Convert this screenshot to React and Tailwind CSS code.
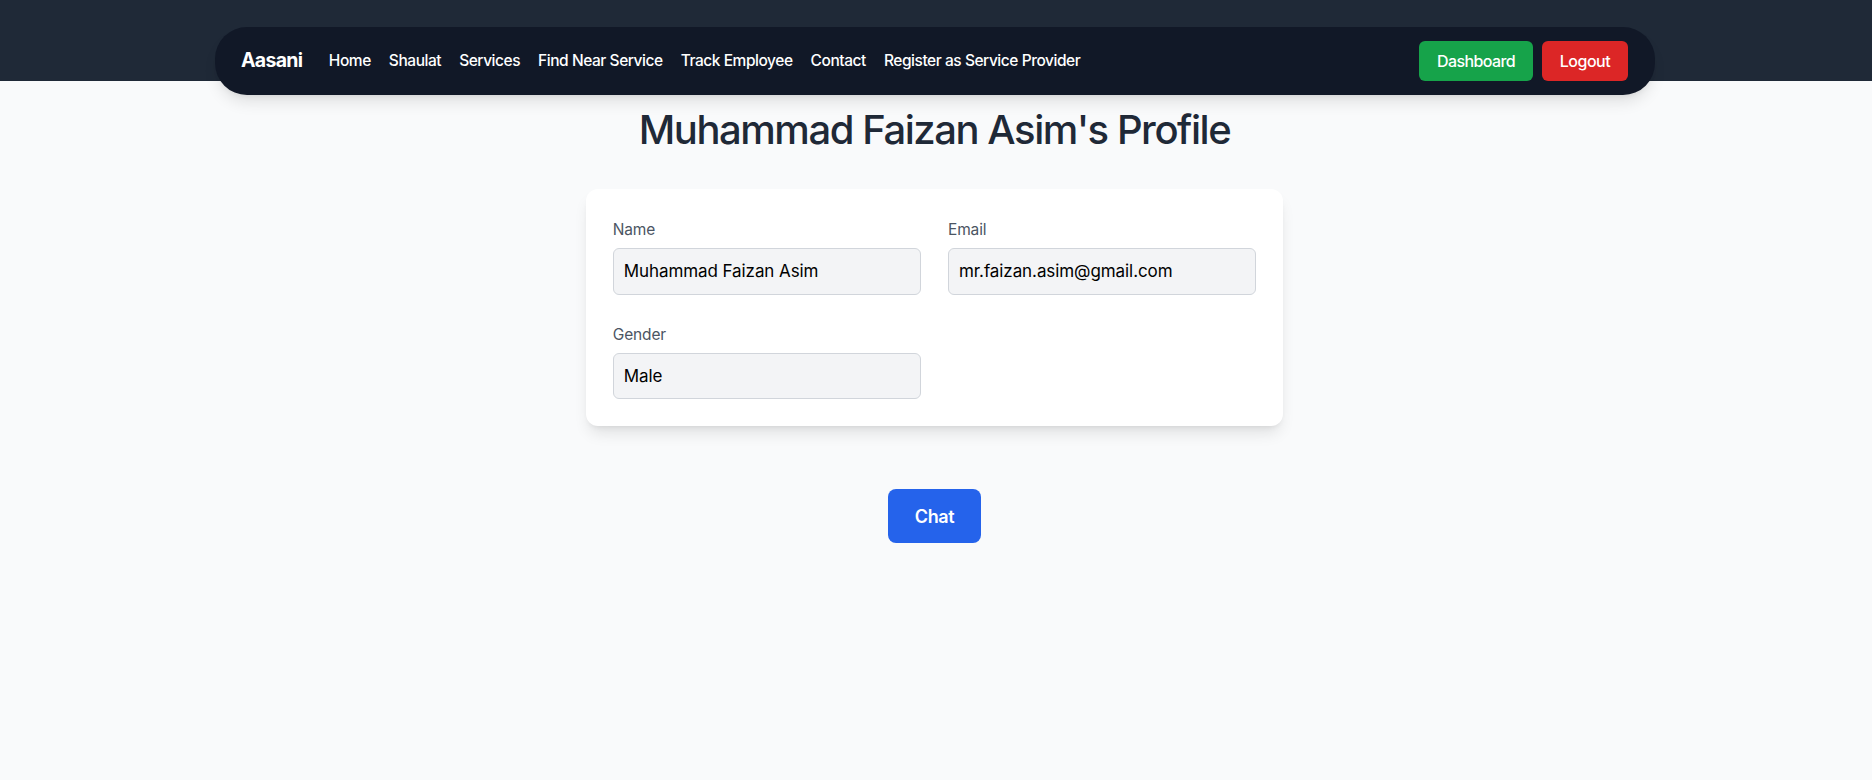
export default function App() {
  const links = ["Home", "Shaulat", "Services", "Find Near Service", "Track Employee", "Contact", "Register as Service Provider"];
  return (
    <div className="min-h-[780px] bg-[#f9fafb] font-['Inter',sans-serif]">
      <header className="h-[81px] bg-[#1f2937] pt-[27px] pr-[2px]">
        <nav className="mx-auto flex h-[68px] w-[1440px] items-center justify-between rounded-[32px] bg-[#111827] pl-[26px] pr-[27px] text-white shadow-lg">
          <div className="flex items-center gap-[26.5px]">
            <span className="text-[19.5px] font-bold tracking-[-0.7px]">Aasani</span>
            <div className="flex items-center gap-[18px]">
              {links.map((l) => (
                <a key={l} className="text-[15.5px] font-medium tracking-[-0.45px]">{l}</a>
              ))}
            </div>
          </div>
          <div className="flex items-center gap-[9px]">
            <button className="h-10 w-[114px] rounded-md bg-[#16a34a] text-[16px] font-medium tracking-[-0.6px]">Dashboard</button>
            <button className="h-10 w-[86px] rounded-md bg-[#dc2626] text-[16px] font-medium tracking-[-0.5px]">Logout</button>
          </div>
        </nav>
      </header>
      <main className="flex flex-col items-center pr-[3px]">
        <h1 className="mt-[25px] text-[40px] leading-[48px] font-[550] tracking-[-1.45px] text-[#1f2937]">Muhammad Faizan Asim's Profile</h1>
        <section className="mt-[35px] grid w-[697.5px] grid-cols-2 gap-x-[27px] gap-y-[26px] rounded-xl bg-white p-[27px] shadow-lg">
          {[["Name", "Muhammad Faizan Asim"], ["Email", "mr.faizan.asim@gmail.com"], ["Gender", "Male"]].map(([label, value]) => (
            <div key={label}>
              <label className="mb-[5px] block text-[15.5px] leading-[27px] tracking-[-0.15px] text-[#4b5563]">{label}</label>
              <div className="flex h-[46.5px] items-center rounded-md border border-[#d1d5db] bg-[#f3f4f6] px-[10px] pt-[1px] text-[17px] tracking-[-0.08px] text-black">{value}</div>
            </div>
          ))}
        </section>
        <button className="mt-[63px] h-[54px] w-[93px] rounded-lg bg-[#2563eb] text-[18px] font-semibold tracking-[-0.4px] text-white">Chat</button>
      </main>
    </div>
  );
}
